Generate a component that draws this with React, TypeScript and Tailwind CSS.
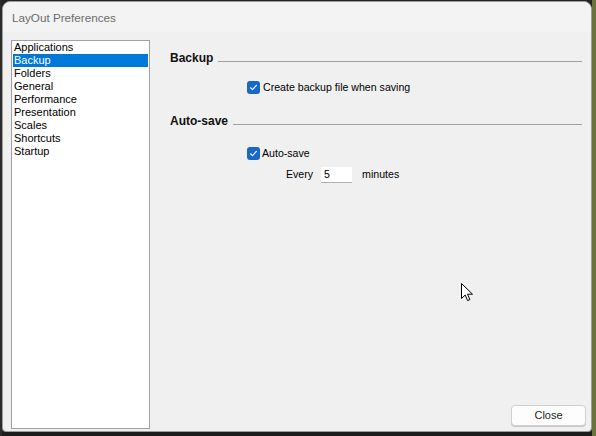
import React from "react";

const items = [
  "Applications",
  "Backup",
  "Folders",
  "General",
  "Performance",
  "Presentation",
  "Scales",
  "Shortcuts",
  "Startup",
];

function Check() {
  return (
    <span className="flex h-[13px] w-[13px] items-center justify-center rounded-[3px] bg-[#1a68c6]">
      <svg width="9" height="9" viewBox="0 0 9 9" fill="none">
        <path d="M1.6 4.8 L3.5 6.6 L7.4 2.4" stroke="white" strokeWidth="1.2" strokeLinecap="round" strokeLinejoin="round" />
      </svg>
    </span>
  );
}

function Header({ label }: { label: string }) {
  return (
    <div className="flex h-[16px] items-start gap-[5px] pr-[4px]">
      <span className="text-[12px] font-bold leading-[16px] text-[#111]">{label}</span>
      <div className="mt-[11px] h-px flex-1 bg-[#a0a0a0]" />
    </div>
  );
}

export default function App() {
  return (
    <div
      className="relative flex h-[436px] w-[596px] overflow-hidden bg-[#242424]"
      style={{ fontFamily: '"Liberation Sans", Arial, sans-serif' }}
    >
      <div className="w-[2px] shrink-0 bg-[#2c2c2c]" />
      <div className="flex w-[590px] shrink-0 flex-col">
        <div className="mt-[1px] flex h-[431px] flex-col rounded-t-[8px] rounded-b-[4px] border border-[#9c9c9c] bg-[#f0f0f0]">
          <div className="flex h-[30px] items-center rounded-t-[8px] bg-[#f3f3f3] pl-[9px] pt-[1px]">
            <span className="text-[11.7px] text-[#6c6c6c]">LayOut Preferences</span>
          </div>
          <div className="flex flex-1">
            <div className="pb-[2px] pl-[8px] pt-[8px]">
              <div className="h-full w-[139px] border border-[#a0a0a8] bg-white py-0 px-[1px]">
                {items.map((it) => (
                  <div
                    key={it}
                    className={
                      it === "Backup"
                        ? "h-[13px] bg-[#0078d7] pl-[1px] text-[11px] leading-[13px] text-white"
                        : "h-[13px] pl-[1px] text-[11px] leading-[13px] text-black"
                    }
                  >
                    {it}
                  </div>
                ))}
              </div>
            </div>
            <div className="flex flex-1 flex-col pb-[5px] pl-[20px] pr-[5px] pt-[18px]">
              <Header label="Backup" />
              <div className="mt-[15px] flex h-[13px] items-center gap-[3px] pl-[77px]">
                <Check />
                <span className="text-[10.6px] leading-[13px] text-black">Create backup file when saving</span>
              </div>
              <div className="mt-[19px]">
                <Header label="Auto-save" />
              </div>
              <div className="mt-[18px] flex h-[13px] items-center gap-[2px] pl-[77px]">
                <Check />
                <span className="text-[10.6px] leading-[13px] text-black">Auto-save</span>
              </div>
              <div className="mt-[7px] flex h-[16px] items-center pl-[116px]">
                <span className="text-[10.6px] text-black">Every</span>
                <div className="ml-[8px] flex h-[16px] w-[31px] items-center border-b border-[#b0b0b0] bg-white pl-[3px] text-[10.6px] text-black">
                  5
                </div>
                <span className="ml-[10px] text-[10.6px] text-black">minutes</span>
              </div>
              <div className="mt-auto flex justify-end">
                <button className="flex h-[21px] w-[75px] items-center justify-center rounded-[4px] border border-[#d0d0d0] bg-[#fdfdfd] text-[11px] text-[#1e1e1e] shadow-[0_1px_0_#c8c8c8]">
                  Close
                </button>
              </div>
            </div>
          </div>
        </div>
        <div className="flex-1 bg-[#1c1c1c]" />
      </div>
      <div className="w-[4px] shrink-0 bg-[#6b7338]" />
      <svg
        className="absolute left-[461px] top-[283px]"
        width="13"
        height="19"
        viewBox="0 0 13 19"
      >
        <path
          d="M0.5 0.5 L0.5 15.5 L4.2 12 L6.6 17.6 L8.9 16.6 L6.5 11.2 L11.5 11.2 Z"
          fill="white"
          stroke="black"
          strokeWidth="1"
          strokeLinejoin="miter"
        />
      </svg>
    </div>
  );
}
